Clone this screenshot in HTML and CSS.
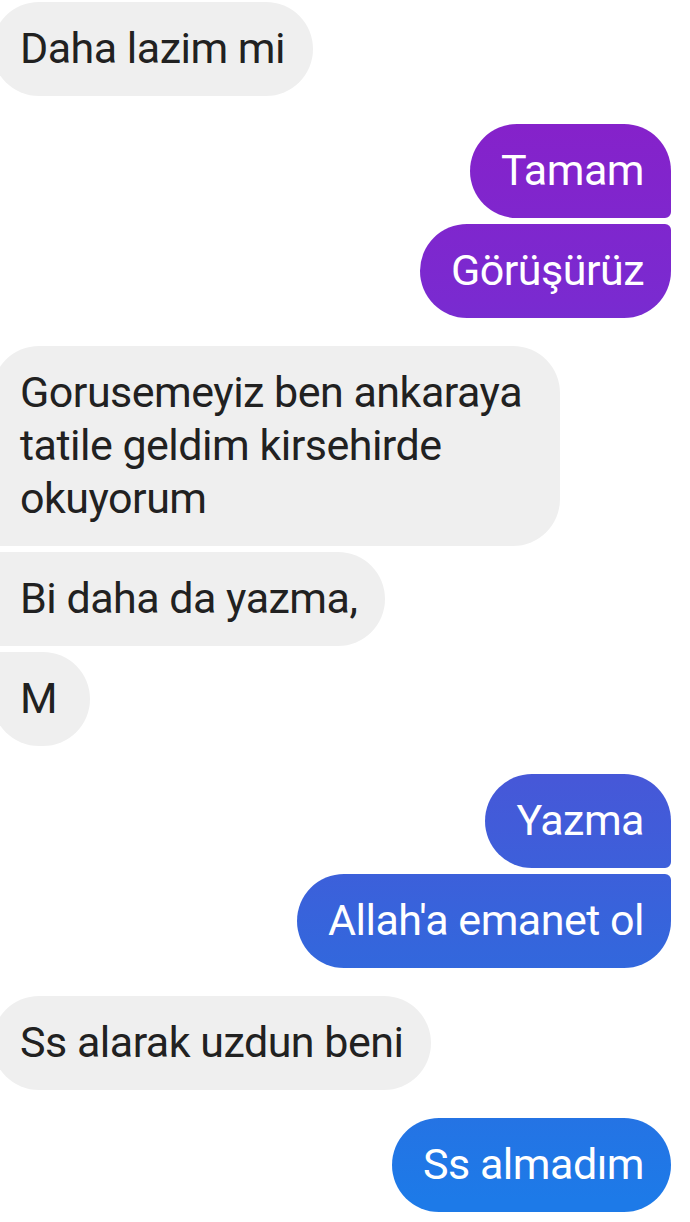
FILE: index.html
```html
<!DOCTYPE html>
<html>
<head>
<meta charset="utf-8">
<link rel="stylesheet" href="styles.css">
</head>
<body>
<div class="chat">
  <div class="group in">
    <div class="msg solo">Daha lazim mi</div>
  </div>
  <div class="group out">
    <div class="msg first">Tamam</div>
    <div class="msg last">Görüşürüz</div>
  </div>
  <div class="group in">
    <div class="msg first wide">Gorusemeyiz ben ankaraya tatile geldim kirsehirde okuyorum</div>
    <div class="msg mid">Bi daha da yazma,</div>
    <div class="msg last">M</div>
  </div>
  <div class="group out">
    <div class="msg first">Yazma</div>
    <div class="msg last">Allah'a emanet ol</div>
  </div>
  <div class="group in">
    <div class="msg solo">Ss alarak uzdun beni</div>
  </div>
  <div class="group out">
    <div class="msg solo">Ss almadım</div>
  </div>
</div>
</body>
</html>
```

FILE: styles.css
```css
html, body {
  margin: 0;
  padding: 0;
  background: #ffffff;
}
body {
  width: 690px;
  height: 1222px;
  overflow: hidden;
  font-family: Roboto, "Liberation Sans", sans-serif;
}
.chat {
  display: flex;
  flex-direction: column;
  gap: 28px;
  padding-top: 2px;
}
.group {
  display: flex;
  flex-direction: column;
  gap: 6px;
}
.group.in {
  align-items: flex-start;
  margin-left: -8px;
}
.group.out {
  align-items: flex-end;
  margin-right: 19px;
}
.msg {
  font-size: 43px;
  line-height: 53px;
  letter-spacing: -0.5px;
  padding: 20px 28px 21px;
  min-width: 98px;
  border-radius: 47px;
  box-sizing: border-box;
}
.in .msg {
  background: #efefef;
  color: #212121;
}
.out .msg {
  color: #ffffff;
  background: linear-gradient(180deg, #8d1cc6 0px, #7a2ad0 300px, #4658d8 780px, #3466dc 950px, #1d7ae8 1200px);
  background-attachment: fixed;
  padding-left: 31px;
  padding-right: 27px;
}
.msg.wide {
  max-width: 568px;
}
.in .first { border-bottom-left-radius: 6px; }
.in .mid { border-top-left-radius: 6px; border-bottom-left-radius: 6px; }
.in .last { border-top-left-radius: 6px; }
.out .first { border-bottom-right-radius: 6px; }
.out .last { border-top-right-radius: 6px; }
```
